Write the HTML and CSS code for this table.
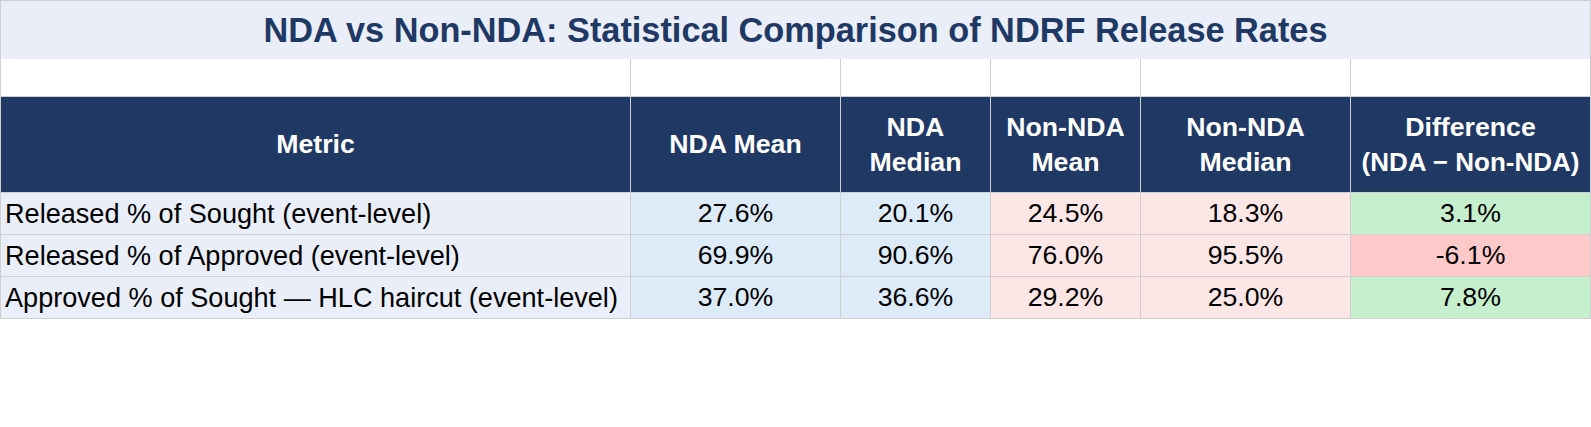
FILE: index.html
```html
<!DOCTYPE html>
<html lang="en">
<head>
<meta charset="utf-8">
<title>NDA vs Non-NDA: Statistical Comparison of NDRF Release Rates</title>
<link rel="stylesheet" href="styles.css">
</head>
<body>
<div class="sheet">
  <div class="title">NDA vs Non-NDA: Statistical Comparison of NDRF Release Rates</div>

  <div class="cell spacer"></div>
  <div class="cell spacer"></div>
  <div class="cell spacer"></div>
  <div class="cell spacer"></div>
  <div class="cell spacer"></div>
  <div class="cell spacer"></div>

  <div class="cell head"><span class="hl">Metric</span></div>
  <div class="cell head"><span class="hl">NDA Mean</span></div>
  <div class="cell head"><span class="hl">NDA<br>Median</span></div>
  <div class="cell head"><span class="hl">Non-NDA<br>Mean</span></div>
  <div class="cell head"><span class="hl">Non-NDA<br>Median</span></div>
  <div class="cell head"><span class="hl">Difference<br><span class="nw">(NDA − Non-NDA)</span></span></div>

  <div class="cell metric">Released % of Sought (event-level)</div>
  <div class="cell num nda">27.6%</div>
  <div class="cell num nda">20.1%</div>
  <div class="cell num non">24.5%</div>
  <div class="cell num non">18.3%</div>
  <div class="cell num pos">3.1%</div>

  <div class="cell metric">Released % of Approved (event-level)</div>
  <div class="cell num nda">69.9%</div>
  <div class="cell num nda">90.6%</div>
  <div class="cell num non">76.0%</div>
  <div class="cell num non">95.5%</div>
  <div class="cell num neg">-6.1%</div>

  <div class="cell metric">Approved % of Sought — HLC haircut (event-level)</div>
  <div class="cell num nda">37.0%</div>
  <div class="cell num nda">36.6%</div>
  <div class="cell num non">29.2%</div>
  <div class="cell num non">25.0%</div>
  <div class="cell num pos">7.8%</div>
</div>
</body>
</html>
```

FILE: styles.css
```css
html, body {
  margin: 0;
  padding: 0;
  background: #ffffff;
}

body {
  font-family: "Liberation Sans", Arial, sans-serif;
  color: #000000;
}

.sheet {
  display: grid;
  grid-template-columns: 630px 210px 150px 150px 210px 240px;
  grid-template-rows: 58px 38px 96px 42px 42px 42px;
  width: 1591px;
  box-sizing: border-box;
  border-left: 1px solid #cfcfcf;
  border-top: 1px solid #cfcfcf;
}

.title {
  grid-column: 1 / -1;
  background: #e9eef9;
  color: #1f3864;
  font-weight: bold;
  font-size: 34.3px;
  display: flex;
  align-items: center;
  justify-content: center;
  border-right: 1px solid #cfcfcf;
  box-sizing: border-box;
}

.cell {
  box-sizing: border-box;
  border-right: 1px solid #cfcfcf;
  border-bottom: 1px solid #cfcfcf;
  display: flex;
  align-items: center;
  font-size: 26.7px;
  min-width: 0;
}

.spacer {
  background: #ffffff;
}

.head {
  background: #1f3864;
  color: #ffffff;
  font-weight: bold;
  line-height: 35px;
  justify-content: center;
  text-align: center;
  padding: 0;
}

.hl {
  display: block;
}

.nw {
  white-space: nowrap;
  font-size: 26px;
}

.metric {
  background: #e9eef9;
  padding-left: 4px;
  white-space: nowrap;
  font-size: 27.1px;
}

.num {
  justify-content: center;
}

.nda {
  background: #ddebf8;
}

.non {
  background: #fde6e6;
}

.pos {
  background: #c6efce;
}

.neg {
  background: #ffc9c9;
}
```
